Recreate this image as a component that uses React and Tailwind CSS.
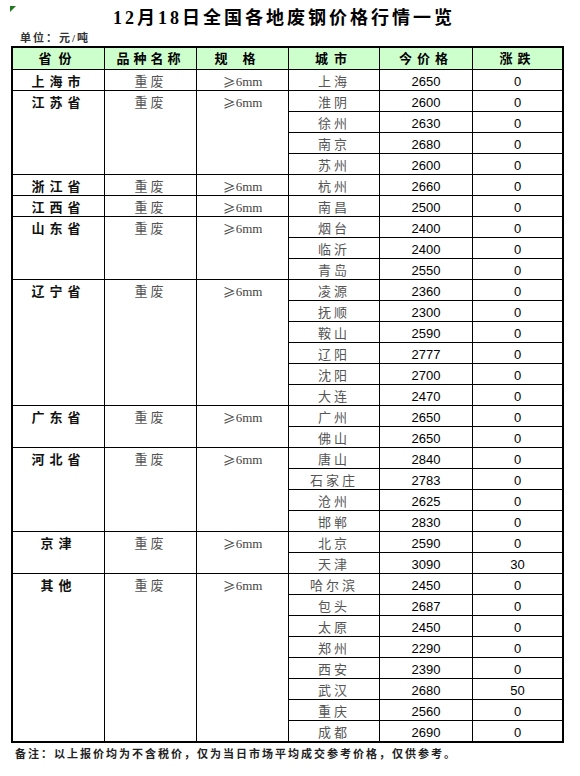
import React from "react";

const groups = [
  { p: "上海市", rows: [["上海", "2650", "0"]] },
  { p: "江苏省", rows: [["淮阴", "2600", "0"], ["徐州", "2630", "0"], ["南京", "2680", "0"], ["苏州", "2600", "0"]] },
  { p: "浙江省", rows: [["杭州", "2660", "0"]] },
  { p: "江西省", rows: [["南昌", "2500", "0"]] },
  { p: "山东省", rows: [["烟台", "2400", "0"], ["临沂", "2400", "0"], ["青岛", "2550", "0"]] },
  { p: "辽宁省", rows: [["凌源", "2360", "0"], ["抚顺", "2300", "0"], ["鞍山", "2590", "0"], ["辽阳", "2777", "0"], ["沈阳", "2700", "0"], ["大连", "2470", "0"]] },
  { p: "广东省", rows: [["广州", "2650", "0"], ["佛山", "2650", "0"]] },
  { p: "河北省", rows: [["唐山", "2840", "0"], ["石家庄", "2783", "0"], ["沧州", "2625", "0"], ["邯郸", "2830", "0"]] },
  { p: "京津", rows: [["北京", "2590", "0"], ["天津", "3090", "30"]] },
  { p: "其他", rows: [["哈尔滨", "2450", "0"], ["包头", "2687", "0"], ["太原", "2450", "0"], ["郑州", "2290", "0"], ["西安", "2390", "0"], ["武汉", "2680", "50"], ["重庆", "2560", "0"], ["成都", "2690", "0"]] },
];

const span = {
  1: "row-span-1",
  2: "row-span-2",
  3: "row-span-3",
  4: "row-span-4",
  6: "row-span-6",
  8: "row-span-8",
};

const cjk = "font-['Liberation_Serif','Noto_Sans_CJK_SC',serif]";
const cell = "border-b border-black flex justify-center";

function Header({ children, tracking }) {
  return (
    <div className={`${cell} border-r items-center bg-[#ccffcc] pt-[1px] text-[13px] font-bold text-black ${tracking}`}>
      <span className={cjk}>{children}</span>
    </div>
  );
}

export default function App() {
  return (
    <div className="relative w-[580px] h-[776px] bg-white text-black">
      <svg className="absolute left-[10px] top-[6px]" width="7" height="7" viewBox="0 0 7 7">
        <polygon points="0,0 6,0 0,6" fill="#1f7a1f" />
      </svg>
      <div className={`h-[31px] pl-[113px] pt-[7px] text-[18px] leading-[22px] font-bold tracking-[3px] ${cjk}`}>
        12月18日全国各地废钢价格行情一览
      </div>
      <div className={`h-[15px] pl-[20px] text-[11px] leading-[15px] font-bold tracking-[2px] text-[#333] ${cjk}`}>
        单位：元/吨
      </div>
      <div className="ml-[11px] w-[553px] border-t-2 border-l-2 border-r-2 border-b border-black grid grid-cols-[92px_92px_92px_91px_93px_89px] grid-rows-[22px_repeat(32,21px)]">
        <Header tracking="tracking-[7px]">省份</Header>
        <Header tracking="tracking-[4px]">品种名称</Header>
        <Header tracking="tracking-[15px]">规格</Header>
        <Header tracking="tracking-[6px]">城市</Header>
        <Header tracking="tracking-[5px]">今价格</Header>
        <div className={`${cell} items-center bg-[#ccffcc] pt-[1px] text-[13px] font-bold tracking-[5px]`}>
          <span className={cjk}>涨跌</span>
        </div>
        {groups.map((g) => {
          const n = g.rows.length;
          return (
            <React.Fragment key={g.p}>
              <div className={`${cell} border-r ${span[n]} items-start pt-[4px] text-[13px] leading-[16px] font-bold tracking-[5px] text-[#111] ${cjk}`}>
                {g.p}
              </div>
              <div className={`${cell} border-r ${span[n]} items-start pt-[4px] text-[13px] leading-[16px] tracking-[3px] text-[#555] ${cjk}`}>
                重废
              </div>
              <div className={`${cell} border-r ${span[n]} items-start pt-[4px] text-[13px] leading-[16px] text-[#444]`}>
                <span className="font-['Noto_Sans_CJK_SC',sans-serif]">≥</span>
                <span className="font-['Liberation_Serif',serif]">6mm</span>
              </div>
              {g.rows.map(([c, price, chg]) => (
                <React.Fragment key={c}>
                  <div className={`${cell} border-r items-start pt-[4px] text-[13px] leading-[16px] tracking-[3px] text-[#555] ${cjk}`}>
                    {c}
                  </div>
                  <div className={`${cell} border-r items-start pt-[4px] text-[13px] leading-[16px] font-['Liberation_Sans',Arial,sans-serif]`}>
                    {price}
                  </div>
                  <div className={`${cell} items-start pt-[4px] text-[13px] leading-[16px] font-['Liberation_Sans',Arial,sans-serif]`}>
                    {chg}
                  </div>
                </React.Fragment>
              ))}
            </React.Fragment>
          );
        })}
      </div>
      <div className={`pl-[15px] mt-[2px] text-[11px] leading-[18px] font-bold tracking-[2px] text-[#222] ${cjk}`}>
        备注：以上报价均为不含税价，仅为当日市场平均成交参考价格，仅供参考。
      </div>
    </div>
  );
}
